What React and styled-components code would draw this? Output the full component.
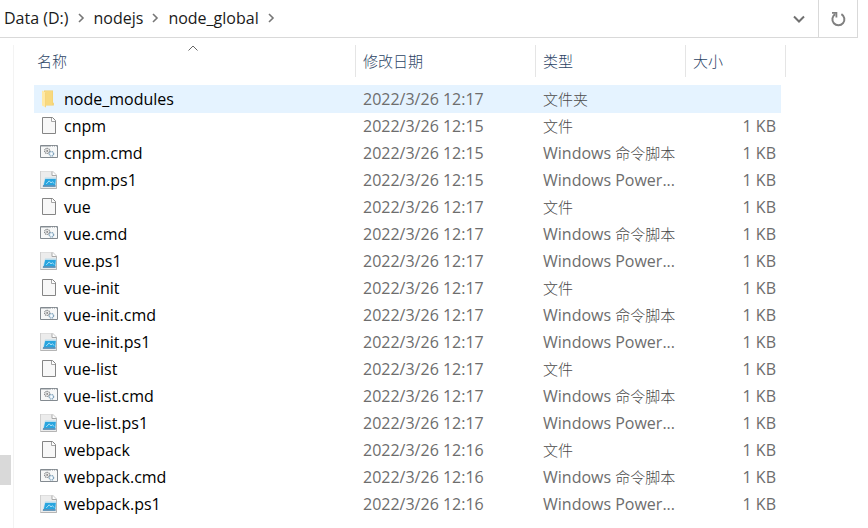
import React from 'react';
import styled, { createGlobalStyle } from 'styled-components'

const GlobalStyle = createGlobalStyle`
  * {
    box-sizing: border-box;
  }
  body {
    margin: 0;
    background: #ffffff;
    font-family: "Open Sans", "Noto Sans CJK SC", sans-serif;
    font-size: 16px;
    line-height: 22px;
    color: #000000;
  }
  button {
    font: inherit;
    color: inherit;
    background: none;
    border: 0;
    padding: 0;
  }
`

const Window = styled.div`
  display: flex;
  flex-direction: column;
  min-height: 100vh;
`

const AddressBar = styled.header`
  display: flex;
  height: 38px;
  margin-right: 10px;
  border-right: 1px solid #d9d9d9;
  border-bottom: 1px solid #d9d9d9;
`

const Breadcrumbs = styled.nav`
  display: flex;
  flex: 1;
  align-items: center;
  padding: 0 0 1px 4px;
`

const Crumb = styled.button`
  color: #1a1a1a;
`

const CrumbArrow = styled.svg`
  width: 8px;
  height: 10px;
  margin: 0 9px 0 8px;
`

const BarButton = styled.button`
  display: flex;
  align-items: center;
  justify-content: center;
  width: 39px;
  border-left: ${props => props.$divided ? '1px solid #d9d9d9' : '0'};
`

const Body = styled.div`
  display: flex;
  flex: 1;
`

const Sidebar = styled.aside`
  display: flex;
  flex-direction: column;
  justify-content: flex-end;
  width: 13px;
  padding-bottom: 43px;
`

const ScrollThumb = styled.div`
  width: 11px;
  height: 30px;
  background: #d9d9d9;
`

const Content = styled.main`
  flex: 1;
  margin-top: 7px;
  padding: 0 0 10px 20px;
  border-left: 1px solid #f3f3f3;
`

const Files = styled.table`
  width: 752px;
  table-layout: fixed;
  border-collapse: separate;
  border-spacing: 0;
`

const Column = styled.col`
  width: ${props => props.$width}px;
`

const HeadCell = styled.th`
  height: 32px;
  padding: 0;
  border-right: 1px solid #e5e5e5;
  font-size: 15px;
  font-weight: 300;
  color: #2c4465;
`

const SortButton = styled.button`
  display: flex;
  position: relative;
  align-items: center;
  width: 100%;
  height: 32px;
  padding-left: ${props => props.$first ? '3px' : '7px'};
`

const SortMark = styled.svg`
  position: absolute;
  top: 0;
  left: calc(50% - 7px);
  width: 10px;
  height: 6px;
`

const Gap = styled.tr`
  height: 8px;
`

const Row = styled.tr`
  height: ${props => props.$selected ? '28px' : '27px'};
  background: ${props => props.$selected ? '#e5f3ff' : 'transparent'};

  td {
    background: inherit;
  }
`

const Cell = styled.td`
  padding: 0 0 1px 7px;
  color: #6d6d6d;
  white-space: nowrap;
`

const NameCell = styled(Cell)`
  padding-left: 6px;
  color: #000000;
`

const SizeCell = styled(Cell)`
  padding-right: 5px;
  border-right: 5px solid #ffffff;
  text-align: right;
`

const FileName = styled.div`
  display: flex;
  align-items: center;
  gap: 6px;

  svg {
    width: 18px;
    height: 18px;
  }
`

const Hanzi = styled.span`
  font-size: 15px;
  font-weight: 300;
  color: #4a4a4a;
`

function FolderIcon() {
  return (
    <svg viewBox="0 0 18 18" aria-hidden="true">
      <path d="M4 0.5H13V12.5L13.8 13V15.5H4Z" fill="#f3cd68" />
      <path d="M5 1H12.6V15H5Z" fill="#f8d97f" />
      <path d="M2 0.5L6 2.5V17.5L2 15.5Z" fill="#ffe9a6" />
      <path d="M5.5 2.4V17.2" stroke="#f0c862" strokeWidth="0.6" />
    </svg>
  )
}

function FileIcon() {
  return (
    <svg viewBox="0 0 18 18" aria-hidden="true">
      <path d="M2.5 0.5H12.5L15.5 3.5V16.5H2.5Z" fill="#f8f8f8" stroke="#858585" />
      <path d="M11.5 1V4.5H15" fill="#ffffff" stroke="#a5a5a5" />
    </svg>
  )
}

function CmdIcon() {
  return (
    <svg viewBox="0 0 18 18" aria-hidden="true">
      <path d="M0.5 1.5H17.5V13.5H0.5Z" fill="#f7f8f8" stroke="#838a90" />
      <path d="M1 2H17V3H1Z" fill="#c4c8cb" />
      <path d="M11 2.4H12M13 2.4H14M15 2.4H16" stroke="#ffffff" />
      <circle cx="7.2" cy="6.9" r="2.6" fill="#e9e9e9" stroke="#7d8083" strokeWidth="1.1" strokeDasharray="1.1 0.6" />
      <circle cx="7.2" cy="6.9" r="0.9" fill="#808080" />
      <circle cx="11.4" cy="9.8" r="2.3" fill="#dcebf5" stroke="#7b9db5" strokeWidth="1.1" strokeDasharray="1.1 0.6" />
      <circle cx="11.4" cy="9.8" r="0.9" fill="#ffffff" />
    </svg>
  )
}

function PowerShellIcon() {
  return (
    <svg viewBox="0 0 18 18" aria-hidden="true">
      <path d="M0.5 0H12.5L16.5 4V17.5H0.5Z" fill="#ececec" stroke="#d0d0d0" />
      <path d="M12 0.5V4.5H16" fill="#ffffff" stroke="#a8a8a8" />
      <path d="M16.5 4V17.5H0.5" fill="none" stroke="#b5b5b5" />
      <path d="M5 6.5H16.5L15.6 14.5H3Z" fill="#b9dcec" />
      <path d="M5.2 8H15.8L15.1 14.2H3.8Z" fill="#28a5df" />
      <path d="M3 14.3H15.6V15.8H2.8Z" fill="#3d7fae" />
      <path d="M6.2 13L9.2 9.8L11 12L12.4 10.6L14 12.6" fill="none" stroke="#a8def5" strokeWidth="1" />
    </svg>
  )
}

const kinds = {
  folder: { icon: <FolderIcon />, label: <Hanzi>文件夹</Hanzi> },
  file: { icon: <FileIcon />, label: <Hanzi>文件</Hanzi> },
  cmd: { icon: <CmdIcon />, label: <>Windows <Hanzi>命令脚本</Hanzi></> },
  ps1: { icon: <PowerShellIcon />, label: 'Windows Power...' },
}

const path = ['Data (D:)', 'nodejs', 'node_global']

class App extends React.Component {

  state = {
    selected: 'node_modules',
    files: [
      { name: 'node_modules', time: '12:17', kind: 'folder' },
      { name: 'cnpm', time: '12:15', kind: 'file' },
      { name: 'cnpm.cmd', time: '12:15', kind: 'cmd' },
      { name: 'cnpm.ps1', time: '12:15', kind: 'ps1' },
      { name: 'vue', time: '12:17', kind: 'file' },
      { name: 'vue.cmd', time: '12:17', kind: 'cmd' },
      { name: 'vue.ps1', time: '12:17', kind: 'ps1' },
      { name: 'vue-init', time: '12:17', kind: 'file' },
      { name: 'vue-init.cmd', time: '12:17', kind: 'cmd' },
      { name: 'vue-init.ps1', time: '12:17', kind: 'ps1' },
      { name: 'vue-list', time: '12:17', kind: 'file' },
      { name: 'vue-list.cmd', time: '12:17', kind: 'cmd' },
      { name: 'vue-list.ps1', time: '12:17', kind: 'ps1' },
      { name: 'webpack', time: '12:16', kind: 'file' },
      { name: 'webpack.cmd', time: '12:16', kind: 'cmd' },
      { name: 'webpack.ps1', time: '12:16', kind: 'ps1' },
    ],
  }

  selectFile = (name) => {
    this.setState({ selected: name });
  };

  render() {
    return (
      <Window>
        <GlobalStyle />
        <AddressBar>
          <Breadcrumbs>
            {path.map(folder => (
              <React.Fragment key={folder}>
                <Crumb>{folder}</Crumb>
                <CrumbArrow viewBox="0 0 8 10" aria-hidden="true">
                  <path d="M2 1L6 5L2 9" fill="none" stroke="#777777" strokeWidth="1.6" />
                </CrumbArrow>
              </React.Fragment>
            ))}
          </Breadcrumbs>
          <BarButton aria-label="历史记录">
            <svg width="12" height="8" viewBox="0 0 12 8">
              <path d="M1 1.5L6 6.5L11 1.5" fill="none" stroke="#707070" strokeWidth="2" />
            </svg>
          </BarButton>
          <BarButton $divided aria-label="刷新">
            <svg width="16" height="16" viewBox="0 0 16 16">
              <path d="M11.4 3.1A6 6 0 1 1 5.2 3.2" fill="none" stroke="#808080" strokeWidth="2" />
              <path d="M2 1.9H6.4V6.4" fill="none" stroke="#808080" strokeWidth="1.8" />
            </svg>
          </BarButton>
        </AddressBar>
        <Body>
          <Sidebar>
            <ScrollThumb />
          </Sidebar>
          <Content>
            <Files>
              <colgroup>
                <Column $width={322} />
                <Column $width={180} />
                <Column $width={150} />
                <Column $width={100} />
              </colgroup>
              <thead>
                <tr>
                  <HeadCell>
                    <SortButton $first>
                      名称
                      <SortMark viewBox="0 0 10 6" aria-hidden="true">
                        <path d="M0.5 5.5L5 1L9.5 5.5" fill="none" stroke="#666666" />
                      </SortMark>
                    </SortButton>
                  </HeadCell>
                  <HeadCell><SortButton>修改日期</SortButton></HeadCell>
                  <HeadCell><SortButton>类型</SortButton></HeadCell>
                  <HeadCell><SortButton>大小</SortButton></HeadCell>
                </tr>
                <Gap />
              </thead>
              <tbody>
                {this.state.files.map(file => (
                  <Row
                    key={file.name}
                    $selected={file.name === this.state.selected}
                    onClick={() => this.selectFile(file.name)}
                  >
                    <NameCell>
                      <FileName>
                        {kinds[file.kind].icon}
                        {file.name}
                      </FileName>
                    </NameCell>
                    <Cell>2022/3/26 {file.time}</Cell>
                    <Cell>{kinds[file.kind].label}</Cell>
                    <SizeCell>{file.kind === 'folder' ? '' : '1 KB'}</SizeCell>
                  </Row>
                ))}
              </tbody>
            </Files>
          </Content>
        </Body>
      </Window>
    );
  }

}

export default App;
